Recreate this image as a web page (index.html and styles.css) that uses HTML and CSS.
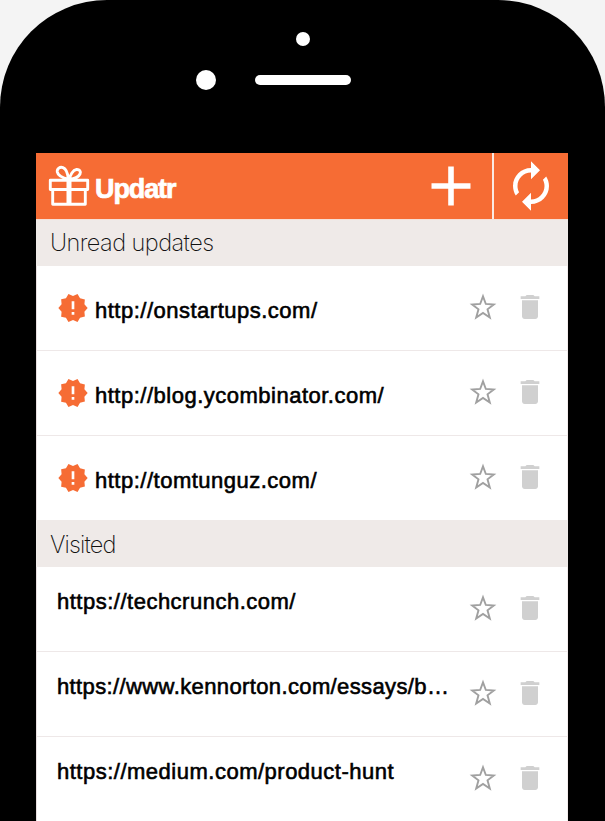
FILE: index.html
```html
<!DOCTYPE html>
<html lang="en">
<head>
<meta charset="utf-8">
<title>Updatr</title>
<link rel="stylesheet" href="styles.css">
</head>
<body>
<svg class="sprite" aria-hidden="true">
  <symbol id="star" viewBox="0.700 0.900 28.600 28.600"><path fill="none" stroke="#a0a0a0" stroke-width="1.8" d="M15 5L17.700 12.300L25.300 12.900L19.300 17.400L21.500 25.200L15 20.900L8.500 25.200L10.700 17.400L4.700 12.900L12.300 12.300z"/></symbol>
  <symbol id="trash" viewBox="0 0 24 24"><path d="M6 19c0 1.1.9 2 2 2h8c1.1 0 2-.9 2-2V7H6v12zM19 4h-3.5l-1-1h-5l-1 1H5v2h14V4z"/></symbol>
  <symbol id="alert" viewBox="0 0 24 24"><path d="M23 12l-2.44-2.78.34-3.68-3.61-.82-1.89-3.18L12 3 8.6 1.54 6.71 4.72l-3.61.81.34 3.68L1 12l2.44 2.78-.34 3.69 3.61.82 1.89 3.18L12 21l3.4 1.46 1.89-3.18 3.61-.82-.34-3.68L23 12zm-10 5h-2v-2h2v2zm0-4h-2V7h2v6z"/></symbol>
</svg>
<div class="phone">
  <div class="bezel">
    <span class="sensor"></span>
    <div class="ear"><span class="camera"></span><span class="speaker"></span></div>
  </div>
  <main class="screen">
    <header class="bar">
      <svg class="gift" viewBox="0 0 42 42"><g fill="none" stroke="#fff" stroke-width="2.900" stroke-linejoin="round" stroke-linecap="round"><path d="M2.3 15.3h37.4v9.2H2.3zM4.7 24.5h32.6v14.8H4.7z"/><path stroke-width="5" stroke-linecap="butt" d="M21 15v24"/><path d="M20.500 14.500C17 13.500 10 11 9.300 7C8.800 3.500 12 1.500 15 2.600C19 4 20 10 20.500 14.500M21.500 14.500C22 10 25 5 28.500 4.500C31.500 4.200 33.200 6.500 32 9C30.500 12 25.500 14 21.500 14.500"/></g></svg>
      <h1 class="brand">Updatr</h1>
      <button class="add" aria-label="Add"><svg viewBox="0 0 40 40"><path d="M17.200 .5h5.600v16.700h16.700v5.600H22.800v16.700h-5.600V22.800H.5v-5.600h16.700z"/></svg></button>
      <button class="refresh" aria-label="Refresh"><svg viewBox="0 0 24 24"><path d="M12 6v3l4-4-4-4v3c-4.420 0-8 3.580-8 8 0 1.570.460 3.030 1.240 4.260L6.700 14.800c-.450-.830-.700-1.790-.700-2.800 0-3.310 2.690-6 6-6zm6.760 1.740L17.300 9.200c.440.840.700 1.790.700 2.800 0 3.310-2.690 6-6 6v-3l-4 4 4 4v-3c4.420 0 8-3.580 8-8 0-1.570-.460-3.030-1.240-4.260z"/></svg></button>
    </header>
    <h2 class="section">Unread updates</h2>
    <ul class="list unread">
      <li class="row"><svg class="alert"><use href="#alert"/></svg><span class="url">http://onstartups.com/</span><svg class="star"><use href="#star"/></svg><svg class="trash"><use href="#trash"/></svg></li>
      <li class="row"><svg class="alert"><use href="#alert"/></svg><span class="url">http://blog.ycombinator.com/</span><svg class="star"><use href="#star"/></svg><svg class="trash"><use href="#trash"/></svg></li>
      <li class="row"><svg class="alert"><use href="#alert"/></svg><span class="url">http://tomtunguz.com/</span><svg class="star"><use href="#star"/></svg><svg class="trash"><use href="#trash"/></svg></li>
    </ul>
    <h2 class="section visited-title">Visited</h2>
    <ul class="list visited">
      <li class="row"><span class="url">https://techcrunch.com/</span><svg class="star"><use href="#star"/></svg><svg class="trash"><use href="#trash"/></svg></li>
      <li class="row"><span class="url long">https://www.kennorton.com/essays/b…</span><svg class="star"><use href="#star"/></svg><svg class="trash"><use href="#trash"/></svg></li>
      <li class="row"><span class="url">https://medium.com/product-hunt</span><svg class="star"><use href="#star"/></svg><svg class="trash"><use href="#trash"/></svg></li>
    </ul>
  </main>
</div>
</body>
</html>
```
FILE: styles.css
```css
* { box-sizing: border-box; }
body { margin: 0; background: #f4f4f4; font-family: "Liberation Sans", Arial, sans-serif; overflow: hidden; }
.sprite { display: none; }
.phone { height: 821px; background: #000; border-radius: 107px 107px 0 0; overflow: hidden; padding: 0 37px 0 36px; }
.bezel { height: 153px; padding-top: 32px; }
.sensor { display: block; width: 14px; height: 14px; border-radius: 50%; background: #fff; margin-left: 260px; }
.ear { display: flex; align-items: center; gap: 39px; margin: 24px 0 0 160px; }
.camera { width: 20px; height: 20px; border-radius: 50%; background: #fff; }
.speaker { width: 96px; height: 10px; border-radius: 5px; background: #fff; }
.screen { height: 668px; background: #fff; overflow: hidden; }
.bar { display: flex; align-items: center; height: 66px; background: #f66c34; }
.gift { width: 42px; height: 42px; margin: -1px 0 0 12px; }
.brand { flex: 1; margin: 5px 0 0 5px; font-size: 27px; line-height: 30px; letter-spacing: -1.100px; color: #fff; -webkit-text-stroke: .7px #fff; }
button { padding: 0; border: 0; background: none; fill: #fff; height: 66px; display: flex; align-items: center; justify-content: center; }
.add { width: 83px; }
.add svg { width: 40px; height: 40px; }
.refresh { width: 76px; border-left: 2px solid #fbe9e2; }
.refresh svg { width: 54px; height: 54px; }
.section { margin: 0; height: 47px; padding-left: 14px; background: #efeae8; border-top: 1px solid #f6dfd6; font-family: Inter, "Liberation Sans", sans-serif; font-size: 23.500px; font-weight: 200; line-height: 46px; letter-spacing: -.550px; color: #111; }
.visited-title { border-color: #efeae8; line-height: 47px; letter-spacing: -.850px; }
.list { list-style: none; margin: 0; padding: 0; border-left: 1px solid #e8dfe0; border-right: 1px solid #f3ecec; }
.row { display: flex; height: 85px; padding: 25px 21px 0 20px; border-bottom: 1px solid #eee8e8; }
.unread .row:last-child { height: 84px; border-bottom: 0; }
.alert { width: 32px; height: 32px; margin: 1px 6px 0 0; fill: #f66c34; flex: none; }
.url { flex: 1; min-width: 0; white-space: nowrap; font-size: 22px; line-height: 26px; letter-spacing: .5px; color: #000; -webkit-text-stroke: .6px #000; padding-top: 7px; }
.visited .url { padding-top: 0; margin-top: -3px; }
.visited .long { letter-spacing: .380px; }
.star { width: 30px; height: 30px; flex: none; margin-top: 1px; }
.trash { width: 32px; height: 32px; flex: none; margin-left: 15.500px; margin-right: .5px; fill: #d0d0d0; }
```
